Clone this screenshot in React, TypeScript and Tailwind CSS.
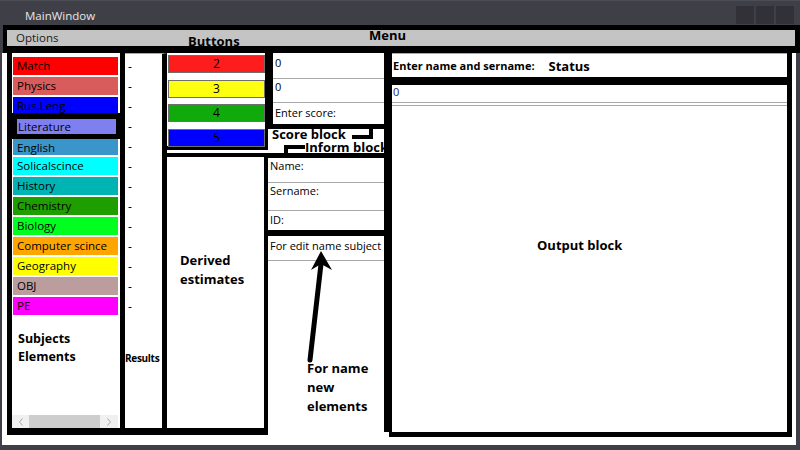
import React from "react";

const subjects: { n: string; c: string; h: number; mb: number }[] = [
  { n: "Match", c: "#ff0000", h: 18, mb: 2 },
  { n: "Physics", c: "#d95c5c", h: 18, mb: 2 },
  { n: "Rus.Leng", c: "#0000ff", h: 16, mb: 0 },
];
const subjects2: { n: string; c: string; h: number; mb: number }[] = [
  { n: "English", c: "#3a95ca", h: 16, mb: 2 },
  { n: "Solicalscince", c: "#00ffff", h: 18, mb: 2 },
  { n: "History", c: "#00b4b4", h: 18, mb: 2 },
  { n: "Chemistry", c: "#1f9e00", h: 18, mb: 2 },
  { n: "Biology", c: "#00ff1e", h: 18, mb: 2 },
  { n: "Computer scince", c: "#ffa500", h: 18, mb: 2 },
  { n: "Geography", c: "#ffff00", h: 18, mb: 2 },
  { n: "OBJ", c: "#bc9d9d", h: 18, mb: 2 },
  { n: "PE", c: "#ff00ff", h: 18, mb: 2 },
];

function Item({ n, c, h, mb }: { n: string; c: string; h: number; mb: number }) {
  return (
    <div
      className="ml-[1px] mr-[2px] pl-[4px] text-[11.5px] text-black overflow-hidden whitespace-nowrap"
      style={{ backgroundColor: c, height: h, marginBottom: mb, lineHeight: "18px" }}
    >
      {n}
    </div>
  );
}

const buttons = [
  { t: "2", c: "bg-[#ff1c1c]" },
  { t: "3", c: "bg-[#ffff10]" },
  { t: "4", c: "bg-[#10aa0c]" },
  { t: "5", c: "bg-[#0000ff]" },
];

export default function App() {
  return (
    <div className="relative w-[800px] h-[450px] overflow-hidden bg-[#3f4047] font-['Open_Sans','Noto_Sans',sans-serif]">
      {/* title bar */}
      <div className="h-[25px] flex border-t border-[#4c4d55]">
        <div className="pl-[25px] pt-[7px] leading-[16px] text-[11.5px] text-[#e6e6e6]">MainWindow</div>
        <div className="flex-1" />
        <div className="flex gap-[2px] pt-[5px] pr-[6px]">
          <div className="w-[18px] h-[18px] bg-[#313137]" />
          <div className="w-[18px] h-[18px] bg-[#313137]" />
          <div className="w-[18px] h-[18px] bg-[#313137]" />
        </div>
      </div>

      {/* menu */}
      <div className="relative ml-[3px] h-[28px] bg-black pl-[4px] pr-[5px] pt-[5px]">
        <div className="h-[16px] bg-[#c4c4c4] pl-[9px] text-[11.5px] leading-[15px] text-[#1a1a1a]">Options</div>
        <div className="absolute left-[366px] top-[2px] text-[13px] font-bold leading-[16px] text-black">Menu</div>
        <div className="absolute left-[185px] top-[8px] text-[13px] font-bold leading-[16px] text-black">Buttons</div>
      </div>

      {/* white client area */}
      <div className="ml-[2px] w-[794px] h-[392px] bg-white flex pl-[5px]">
        {/* Subjects */}
        <div className="w-[118px] h-[382px] border-l-[5px] border-r-[5px] border-b-[7px] border-black flex flex-col pt-[4px]">
          {subjects.map((s) => (
            <Item key={s.n} {...s} />
          ))}
          <div className="h-[26px] bg-black pt-[6px]">
            <div className="ml-[5px] w-[99px] h-[15px] bg-[#7f7ff0] pl-[1px] text-[11.5px] leading-[15px] text-black">Literature</div>
          </div>
          {subjects2.map((s) => (
            <Item key={s.n} {...s} />
          ))}
          <div className="mt-[13px] pl-[6px] text-[12.5px] font-bold leading-[18px] text-black">
            <div>Subjects</div>
            <div>Elements</div>
          </div>
          <div className="flex-1" />
          <div className="h-[13px] mr-[2px] bg-[#f0f0f0] flex items-center">
            <div className="w-[17px] flex justify-center">
              <svg width="6" height="8" viewBox="0 0 6 8"><path d="M4.5 0.5 L1.5 4 L4.5 7.5" fill="none" stroke="#a6a6a6" strokeWidth="1" /></svg>
            </div>
            <div className="w-[71px] h-[13px] bg-[#cdcdcd]" />
            <div className="flex-1 flex justify-center">
              <svg width="6" height="8" viewBox="0 0 6 8"><path d="M1.5 0.5 L4.5 4 L1.5 7.5" fill="none" stroke="#a6a6a6" strokeWidth="1" /></svg>
            </div>
          </div>
        </div>

        {/* Results */}
        <div className="w-[42px] h-[382px] border-r-[5px] border-b-[7px] border-black border-t border-t-[#a8a8a8] pt-[3px] flex flex-col">
          {Array.from({ length: 13 }).map((_, i) => (
            <div key={i} className="h-[20px] leading-[20px] pl-[3px] text-[12px] text-black">-</div>
          ))}
          <div className="mt-[33px] text-[10px] font-bold leading-[16px] tracking-[-0.3px] text-black">Results</div>
        </div>

        {/* Buttons + derived */}
        <div className="w-[101px] flex flex-col">
          <div className="h-[97px] border-r-[3px] border-b-[4px] border-black pl-[1px] pt-[2px] flex flex-col gap-[6.5px]">
            {buttons.map((b) => (
              <div key={b.t} className={`h-[18px] ${b.c} border border-[#6f6f6f] flex items-center justify-center text-[12px] leading-[16px] text-black`}>
                {b.t}
              </div>
            ))}
          </div>
          <div className="h-[3px]" />
          <div className="h-[282px] border-t-[4px] border-r-[4px] border-b-[7px] border-black pt-[94px] pl-[13px] text-[13px] font-bold leading-[19px] text-black">
            <div>Derived</div>
            <div>estimates</div>
          </div>
        </div>

        {/* Score + Inform */}
        <div className="w-[121px] flex flex-col">
          <div className="h-[76px] border-l-[5px] border-r-[5px] border-b-[5px] border-black pt-[2px] flex flex-col text-[11px] text-black">
            <div className="h-[24px] border-b border-[#a8a8a8] pl-[2px] leading-[15px]">0</div>
            <div className="h-[24px] border-b border-[#a8a8a8] pl-[2px] leading-[15px]">0</div>
            <div className="h-[21px] pl-[2px] pt-[2px] leading-[15px]">Enter score:</div>
          </div>
          <div className="relative h-[24px] border-r-[5px] border-black">
            <div className="absolute left-[4px] top-[-1px] text-[13px] font-bold leading-[12px] text-black whitespace-nowrap">Score block</div>
            <div className="absolute left-[37px] top-[12px] w-[79px] overflow-hidden text-[13px] font-bold leading-[12px] text-black whitespace-nowrap">Inform block</div>
          </div>
          <div className="h-[279px] border-t-[5px] border-r-[5px] border-black flex flex-col text-[11px] text-black">
            <div className="h-[25px] border-b border-[#a8a8a8] pl-[2px] leading-[15px]">Name:</div>
            <div className="h-[28px] border-b border-[#a8a8a8] pl-[2px] leading-[15px]">Sername:</div>
            <div className="h-[19px] pl-[2px] pt-[1px] leading-[15px]">ID:</div>
            <div className="h-[6px] bg-black" />
            <div className="h-[25px] border-b border-[#a8a8a8] pl-[2px] pt-[2px] leading-[15px] whitespace-nowrap">For edit name subject</div>
            <div className="mt-[98px] pl-[39px] text-[13px] font-bold leading-[19px]">
              <div>For name</div>
              <div>new</div>
              <div>elements</div>
            </div>
          </div>
        </div>

        {/* Output */}
        <div className="w-[403px] h-[384px] border-l-[3px] border-r-[5px] border-b-[5px] border-black flex flex-col">
          <div className="h-[24px] border-t border-[#a8a8a8] flex items-center pl-[1px] text-black">
            <span className="text-[11px] font-bold leading-[16px]">Enter name and sername:</span>
            <span className="ml-[14px] text-[13px] font-bold leading-[16px]">Status</span>
          </div>
          <div className="h-[8px] bg-black" />
          <div className="h-[17px] pl-[1px] text-[11px] leading-[14px] text-[#1b1b70]">0</div>
          <div className="h-[1px] bg-[#a8a8a8]" />
          <div className="h-[2px]" />
          <div className="h-[1px] bg-[#a8a8a8]" />
          <div className="pt-[131px] pl-[145px] text-[13px] font-bold leading-[16px] text-black">Output block</div>
        </div>
      </div>

      {/* annotations overlay */}
      <svg className="absolute left-0 top-0 pointer-events-none" width="800" height="450" viewBox="0 0 800 450">
        <path d="M352 137 H371 V127" fill="none" stroke="#000" strokeWidth="4" />
        <path d="M305 147 H286 V155" fill="none" stroke="#000" strokeWidth="4" />
        <line x1="310" y1="360" x2="321" y2="264" stroke="#000" strokeWidth="5" strokeLinecap="round" />
        <polygon points="321,251 311,270 321,264 332,270" fill="#000" />
      </svg>
    </div>
  );
}
